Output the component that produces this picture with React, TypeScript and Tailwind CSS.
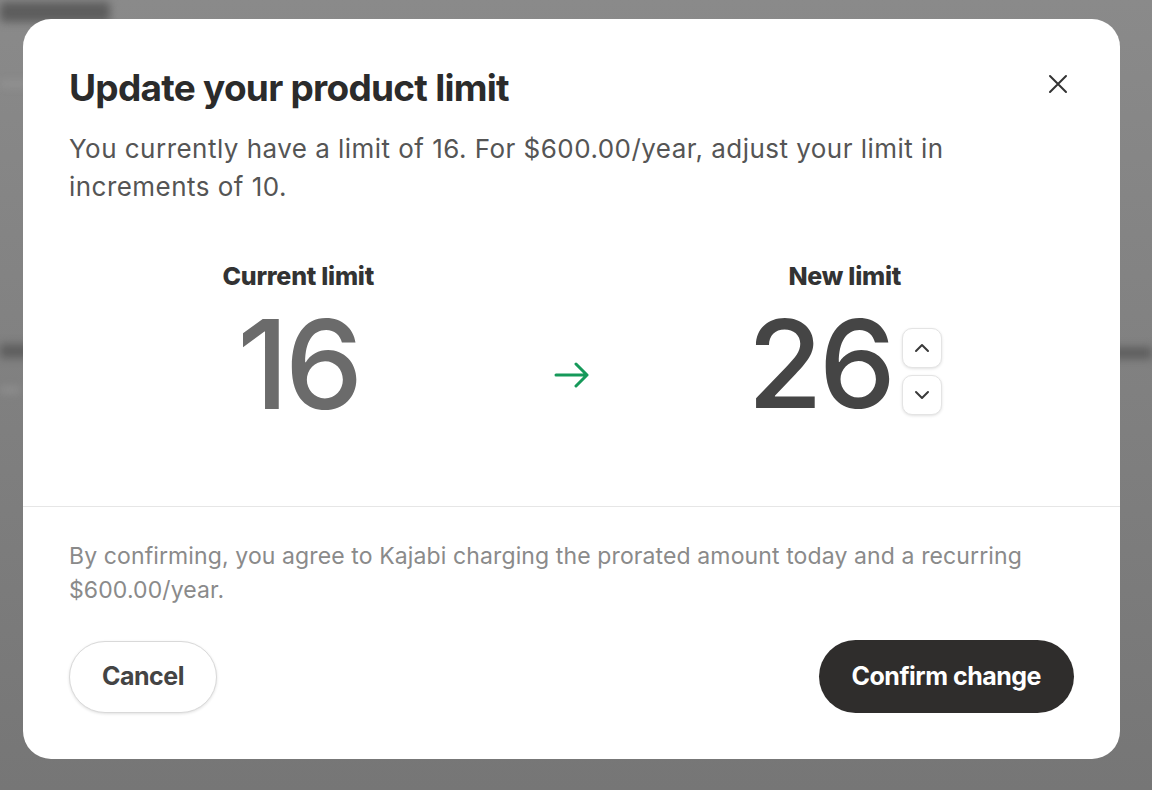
const font = { fontFamily: 'Inter, "Noto Sans", sans-serif' };

const Chevron = ({ up }: { up?: boolean }) => (
    <svg width="18" height="18" viewBox="0 0 18 18" fill="none">
        <path
            d={up ? 'M3 12 L9 6 L15 12' : 'M3 6 L9 12 L15 6'}
            stroke="#3a3a3a"
            strokeWidth="2"
            strokeLinecap="round"
            strokeLinejoin="round"
        />
    </svg>
);

const StepButton = ({ up }: { up?: boolean }) => (
    <button className="w-10 h-10 flex items-center justify-center rounded-[10px] border border-[#e4e4e4] bg-white shadow-[0_1px_3px_rgba(0,0,0,0.12)]">
        <Chevron up={up} />
    </button>
);

export default function App() {
    return (
        <div className="relative w-[1152px] h-[790px] overflow-hidden bg-gradient-to-b from-[#8a8a8a] to-[#767676]" style={font}>
            {/* blurred page behind the dialog */}
            <div className="flex flex-col blur-[4px]">
                <div className="mt-[2px] h-[20px] w-[110px] rounded bg-[#4a4a4a] opacity-70" />
                <div className="mt-[60px] h-[4px] w-[30px] bg-[#9a9a9a]" />
                <div className="mt-[258px] h-[14px] w-[30px] bg-[#555] opacity-80" />
                <div className="mt-[30px] h-[4px] w-[20px] bg-[#999]" />
            </div>
            <div className="absolute right-0 top-[347px] w-[40px] h-[12px] bg-[#5e5e5e] blur-[4px]" />

            <div className="absolute left-[23px] top-[19px] w-[1097px] h-[740px] bg-white rounded-[28px] flex flex-col">
                <button className="absolute right-[52px] top-[55px] w-5 h-5">
                    <svg width="20" height="20" viewBox="0 0 20 20" fill="none">
                        <path d="M2 2 L18 18 M18 2 L2 18" stroke="#333" strokeWidth="2" strokeLinecap="round" />
                    </svg>
                </button>

                <div className="px-[46px] pt-[47px]">
                    <h1 className="text-[37px] leading-[44px] font-bold tracking-[-0.02em] text-[#2b2b2b]">
                        Update your product limit
                    </h1>
                    <p className="mt-[20px] text-[26px] leading-[38px] tracking-[0.018em] text-[#555] max-w-[900px]">
                        You currently have a limit of 16. For $600.00/year, adjust your limit in increments of 10.
                    </p>

                    <div className="mt-[56px] grid grid-cols-[1fr_88px_1fr] items-center">
                        <div className="flex flex-col items-center">
                            <div className="text-[25px] leading-[28px] font-extrabold tracking-[-0.01em] text-[#333]">Current limit</div>
                            <div className="mt-[12px] text-[124px] leading-[124px] font-medium tracking-[-0.03em] text-[#6b6b6b]">16</div>
                        </div>
                        <div className="flex justify-center pt-[62px]">
                            <svg width="36" height="26" viewBox="0 0 36 26" fill="none">
                                <path
                                    d="M2 13 H33 M22 2 L33 13 L22 24"
                                    stroke="#16995a"
                                    strokeWidth="3"
                                    strokeLinecap="round"
                                    strokeLinejoin="round"
                                />
                            </svg>
                        </div>
                        <div className="flex flex-col items-center">
                            <div className="text-[25px] leading-[28px] font-extrabold tracking-[-0.01em] text-[#333]">New limit</div>
                            <div className="mt-[12px] flex items-center gap-[10px]">
                                <div className="text-[122px] leading-[124px] font-medium tracking-[-0.03em] text-[#454545]">26</div>
                                <div className="flex flex-col gap-[7px] mt-[14px]">
                                    <StepButton up />
                                    <StepButton />
                                </div>
                            </div>
                        </div>
                    </div>
                </div>

                <div className="mt-auto border-t border-[#e6e6e6] px-[46px] pt-[32px] pb-[46px]">
                    <p className="text-[23px] leading-[34px] tracking-[0.005em] text-[#8a8a8a] max-w-[990px]">
                        By confirming, you agree to Kajabi charging the prorated amount today and a recurring $600.00/year.
                    </p>
                    <div className="mt-[33px] flex items-center justify-between">
                        <button className="h-[72px] px-[32px] rounded-full border border-[#d9d9d9] bg-white shadow-[0_1px_3px_rgba(0,0,0,0.12)] text-[25px] font-bold tracking-[-0.02em] text-[#444]">
                            Cancel
                        </button>
                        <button className="h-[73px] px-[33px] rounded-full bg-[#2f2d2c] text-[25px] font-bold tracking-[-0.02em] text-white">
                            Confirm change
                        </button>
                    </div>
                </div>
            </div>
        </div>
    );
}
